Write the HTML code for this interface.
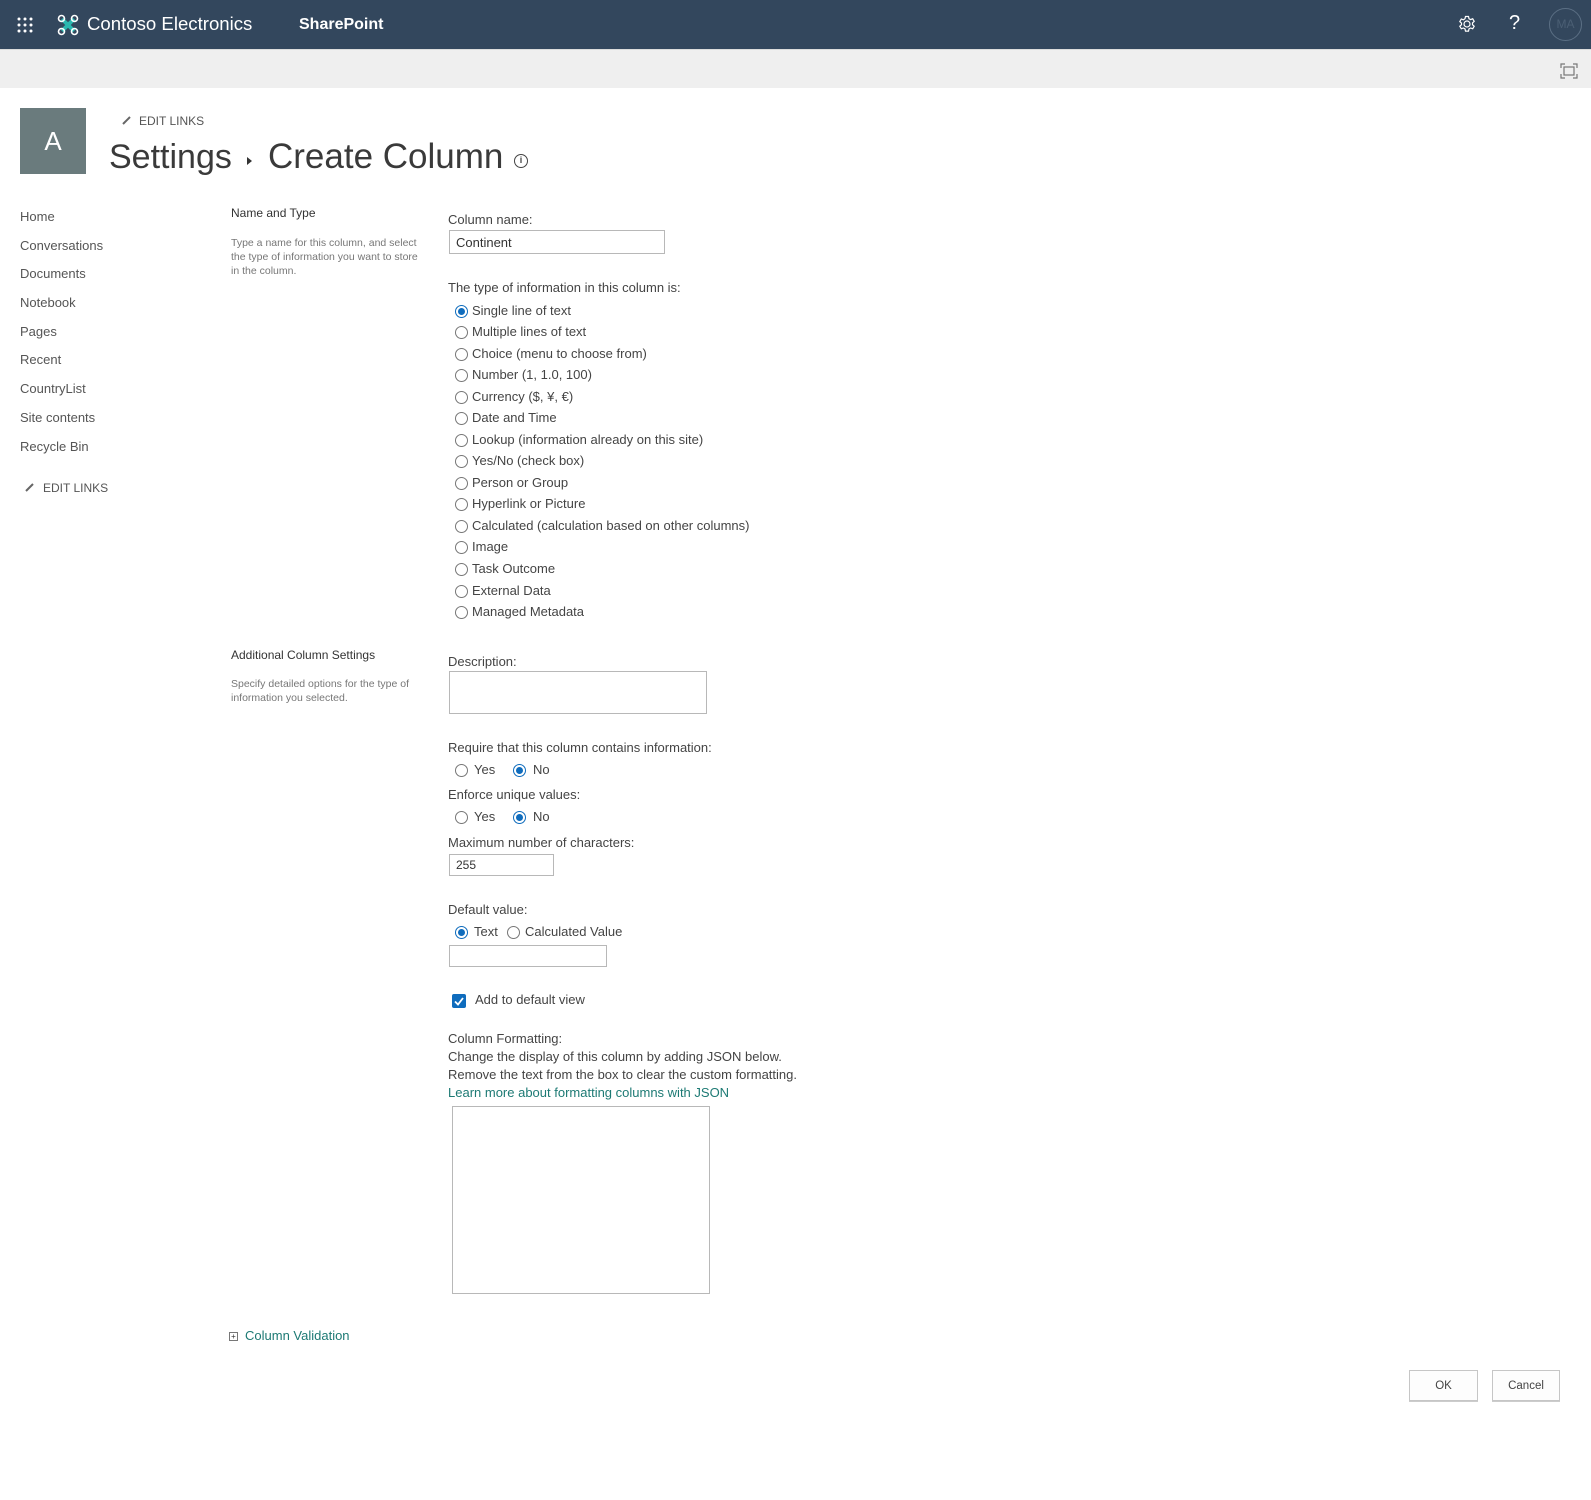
<!DOCTYPE html>
<html><head><meta charset="utf-8"><style>
*{margin:0;padding:0;box-sizing:border-box}
body{width:1591px;height:1500px;background:#fff;font-family:"Liberation Sans",sans-serif;color:#333;position:relative;overflow:hidden}
.a{position:absolute;white-space:nowrap}
.hdr{position:absolute;left:0;top:0;width:1591px;height:49px;background:#33475d}
.bar{position:absolute;left:0;top:49px;width:1591px;height:39px;background:#efefef;border-top:1px solid #dcdcdc}
.nav{font-size:13px;color:#555;left:20px}
.lbl{font-size:13px;color:#444}
.r{position:absolute;width:13px;height:13px;border:1px solid #777;border-radius:50%;background:#fff}
.r.on{border-color:#0f6cbd}
.r.on::after{content:"";position:absolute;left:2px;top:2px;width:7px;height:7px;border-radius:50%;background:#0f6cbd}
.box{position:absolute;border:1px solid #b8b8b8;background:#fff}
.sm{font-size:10.5px;color:#777;line-height:14px}
.btn{position:absolute;border:1px solid #c6c6c6;background:#fdfdfd;font-size:11.5px;color:#444;text-align:center;line-height:30px;box-shadow:0 1px 0 #ccc}
</style></head><body>
<div class="hdr"></div>
<svg class="a" style="left:17px;top:17px" width="16" height="16"><g fill="#fff"><circle cx="2" cy="2" r="1.5"/><circle cx="8" cy="2" r="1.5"/><circle cx="14" cy="2" r="1.5"/><circle cx="2" cy="8" r="1.5"/><circle cx="8" cy="8" r="1.5"/><circle cx="14" cy="8" r="1.5"/><circle cx="2" cy="14" r="1.5"/><circle cx="8" cy="14" r="1.5"/><circle cx="14" cy="14" r="1.5"/></g></svg>
<svg class="a" style="left:57px;top:14px" width="22" height="22"><path d="M5 5L17 17M17 5L5 17" stroke="#2bb8b0" stroke-width="4"/><g fill="none" stroke="#fff" stroke-width="1.6"><circle cx="4.5" cy="4.5" r="3"/><circle cx="17.5" cy="4.5" r="3"/><circle cx="4.5" cy="17.5" r="3"/><circle cx="17.5" cy="17.5" r="3"/></g></svg>
<div class="a" style="left:87px;top:13px;font-size:18.6px;color:#fff">Contoso Electronics</div>
<div class="a" style="left:299px;top:16px;font-size:16px;font-weight:bold;color:#fff">SharePoint</div>
<svg class="a" style="left:1458px;top:15px" width="18" height="18" viewBox="0 0 18 18"><g fill="none" stroke="#fff" stroke-width="1.2"><circle cx="9" cy="9" r="3"/><path d="M7.5 1.5h3l.5 2.2 1.6.9 2.1-.8 1.5 2.6-1.7 1.5v1.8l1.7 1.5-1.5 2.6-2.1-.8-1.6.9-.5 2.2h-3l-.5-2.2-1.6-.9-2.1.8-1.5-2.6 1.7-1.5V8.1L1.8 6.6l1.5-2.6 2.1.8L7 3.7z"/></g></svg>
<div class="a" style="left:1509px;top:12px;font-size:20px;color:#fff">?</div>
<div class="a" style="left:1549px;top:8px;width:33px;height:33px;border-radius:50%;border:1px solid #5b6f84;color:#4b5f74;font-size:12px;text-align:center;line-height:31px">MA</div>
<div class="bar"></div>
<svg class="a" style="left:1560px;top:63px" width="18" height="16"><g fill="none" stroke="#777" stroke-width="1.2"><path d="M1 5V1h4M13 1h4v4M17 11v4h-4M5 15H1v-4"/><rect x="4" y="4" width="10" height="8"/></g></svg>

<div class="a" style="left:20px;top:108px;width:66px;height:66px;background:#6a7b7d;color:#fff;font-size:26px;text-align:center;line-height:66px">A</div>
<svg class="a" style="left:121px;top:114px" width="12" height="12"><path d="M2 10L9 3" stroke="#666" stroke-width="2"/></svg>
<div class="a" style="left:139px;top:114px;font-size:12px;color:#555">EDIT LINKS</div>
<div class="a" style="left:109px;top:138px;font-size:34px;color:#3a3a3a">Settings</div>
<div class="a" style="left:247px;top:157px;width:0;height:0;border-left:5px solid #333;border-top:4px solid transparent;border-bottom:4px solid transparent"></div>
<div class="a" style="left:268px;top:137px;font-size:35px;color:#3a3a3a">Create Column</div>
<div class="a" style="left:514px;top:154px;width:14px;height:14px;border:1.5px solid #444;border-radius:50%;font-size:9px;font-weight:bold;text-align:center;line-height:11px;color:#444">i</div>

<div class="a nav" style="top:209px">Home</div>
<div class="a nav" style="top:238px">Conversations</div>
<div class="a nav" style="top:266px">Documents</div>
<div class="a nav" style="top:295px">Notebook</div>
<div class="a nav" style="top:324px">Pages</div>
<div class="a nav" style="top:352px">Recent</div>
<div class="a nav" style="top:381px">CountryList</div>
<div class="a nav" style="top:410px">Site contents</div>
<div class="a nav" style="top:439px">Recycle Bin</div>
<svg class="a" style="left:24px;top:481px" width="12" height="12"><path d="M2 10L9 3" stroke="#666" stroke-width="2"/></svg>
<div class="a" style="left:43px;top:481px;font-size:12px;color:#555">EDIT LINKS</div>

<div class="a" style="left:231px;top:206px;font-size:12px;color:#333">Name and Type</div>
<div class="a sm" style="left:231px;top:236px">Type a name for this column, and select<br>the type of information you want to store<br>in the column.</div>
<div class="a lbl" style="left:448px;top:212px">Column name:</div>
<div class="box" style="left:449px;top:230px;width:216px;height:24px"></div>
<div class="a" style="left:456px;top:235px;font-size:13px;color:#333">Continent</div>
<div class="a lbl" style="left:448px;top:280px">The type of information in this column is:</div>

<div class="r on" style="left:455px;top:305px"></div><div class="a lbl" style="left:472px;top:303px">Single line of text</div>
<div class="r" style="left:455px;top:326px"></div><div class="a lbl" style="left:472px;top:324px">Multiple lines of text</div>
<div class="r" style="left:455px;top:348px"></div><div class="a lbl" style="left:472px;top:346px">Choice (menu to choose from)</div>
<div class="r" style="left:455px;top:369px"></div><div class="a lbl" style="left:472px;top:367px">Number (1, 1.0, 100)</div>
<div class="r" style="left:455px;top:391px"></div><div class="a lbl" style="left:472px;top:389px">Currency ($, ¥, €)</div>
<div class="r" style="left:455px;top:412px"></div><div class="a lbl" style="left:472px;top:410px">Date and Time</div>
<div class="r" style="left:455px;top:434px"></div><div class="a lbl" style="left:472px;top:432px">Lookup (information already on this site)</div>
<div class="r" style="left:455px;top:455px"></div><div class="a lbl" style="left:472px;top:453px">Yes/No (check box)</div>
<div class="r" style="left:455px;top:477px"></div><div class="a lbl" style="left:472px;top:475px">Person or Group</div>
<div class="r" style="left:455px;top:498px"></div><div class="a lbl" style="left:472px;top:496px">Hyperlink or Picture</div>
<div class="r" style="left:455px;top:520px"></div><div class="a lbl" style="left:472px;top:518px">Calculated (calculation based on other columns)</div>
<div class="r" style="left:455px;top:541px"></div><div class="a lbl" style="left:472px;top:539px">Image</div>
<div class="r" style="left:455px;top:563px"></div><div class="a lbl" style="left:472px;top:561px">Task Outcome</div>
<div class="r" style="left:455px;top:585px"></div><div class="a lbl" style="left:472px;top:583px">External Data</div>
<div class="r" style="left:455px;top:606px"></div><div class="a lbl" style="left:472px;top:604px">Managed Metadata</div>

<div class="a" style="left:231px;top:648px;font-size:12px;color:#333">Additional Column Settings</div>
<div class="a sm" style="left:231px;top:677px">Specify detailed options for the type of<br>information you selected.</div>
<div class="a lbl" style="left:448px;top:654px">Description:</div>
<div class="box" style="left:449px;top:671px;width:258px;height:43px"></div>

<div class="a lbl" style="left:448px;top:740px">Require that this column contains information:</div>
<div class="r" style="left:455px;top:764px"></div><div class="a lbl" style="left:474px;top:762px">Yes</div>
<div class="r on" style="left:513px;top:764px"></div><div class="a lbl" style="left:533px;top:762px">No</div>
<div class="a lbl" style="left:448px;top:787px">Enforce unique values:</div>
<div class="r" style="left:455px;top:811px"></div><div class="a lbl" style="left:474px;top:809px">Yes</div>
<div class="r on" style="left:513px;top:811px"></div><div class="a lbl" style="left:533px;top:809px">No</div>
<div class="a lbl" style="left:448px;top:835px">Maximum number of characters:</div>
<div class="box" style="left:449px;top:854px;width:105px;height:22px"></div>
<div class="a" style="left:456px;top:858px;font-size:12px;color:#333">255</div>

<div class="a lbl" style="left:448px;top:902px">Default value:</div>
<div class="r on" style="left:455px;top:926px"></div><div class="a lbl" style="left:474px;top:924px">Text</div>
<div class="r" style="left:507px;top:926px"></div><div class="a lbl" style="left:525px;top:924px">Calculated Value</div>
<div class="box" style="left:449px;top:945px;width:158px;height:22px"></div>
<div class="a" style="left:452px;top:994px;width:14px;height:14px;background:#0f6cbd;border-radius:2px"></div>
<svg class="a" style="left:452px;top:994px" width="14" height="14"><path d="M3 7.5L6 10.5L11 4" stroke="#fff" stroke-width="1.8" fill="none"/></svg>
<div class="a lbl" style="left:475px;top:992px">Add to default view</div>

<div class="a lbl" style="left:448px;top:1031px">Column Formatting:</div>
<div class="a lbl" style="left:448px;top:1049px">Change the display of this column by adding JSON below.</div>
<div class="a lbl" style="left:448px;top:1067px">Remove the text from the box to clear the custom formatting.</div>
<div class="a lbl" style="left:448px;top:1085px;color:#1d7a74">Learn more about formatting columns with JSON</div>
<div class="box" style="left:452px;top:1106px;width:258px;height:188px"></div>

<div class="a" style="left:229px;top:1332px;width:9px;height:9px;border:1px solid #777;font-size:8px;line-height:7px;text-align:center;color:#333">+</div>
<div class="a lbl" style="left:245px;top:1328px;color:#1d7a74">Column Validation</div>

<div class="btn" style="left:1409px;top:1370px;width:69px;height:31px">OK</div>
<div class="btn" style="left:1492px;top:1370px;width:68px;height:31px">Cancel</div>
</body></html>
